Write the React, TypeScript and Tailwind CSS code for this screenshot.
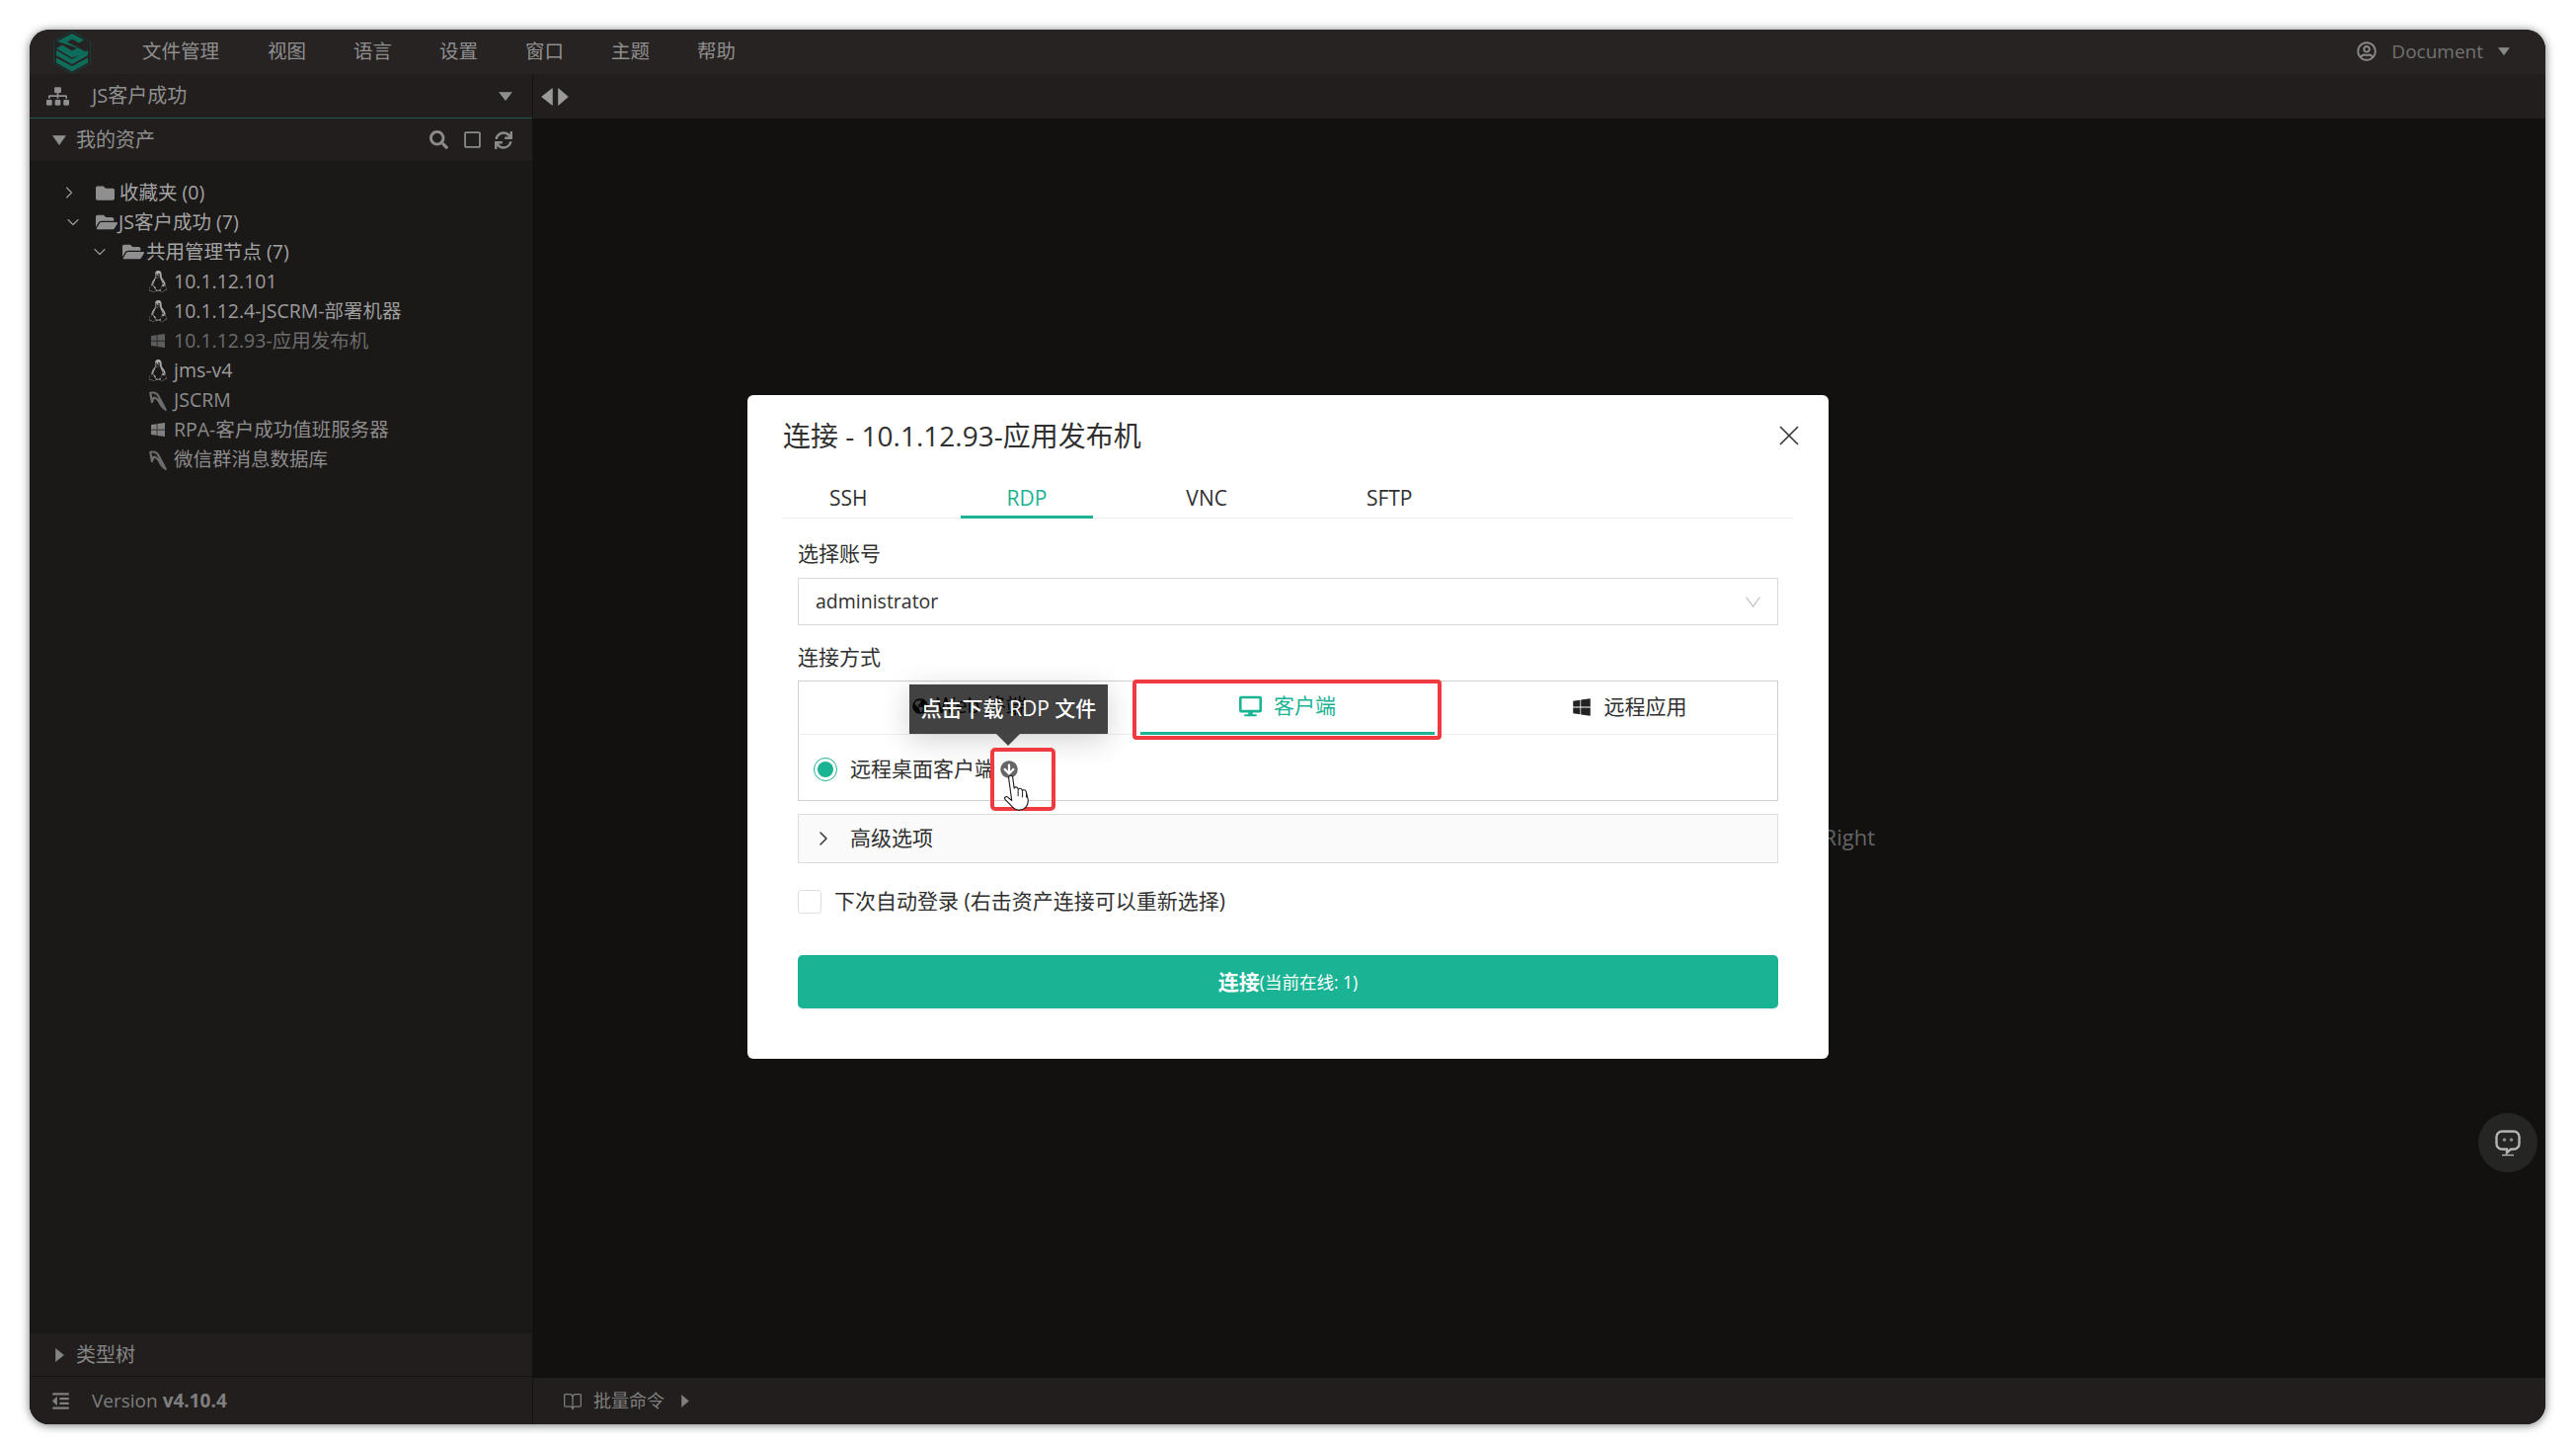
import React from "react";
import {
  FaSitemap, FaSearch, FaRegSquare, FaSync, FaFolder, FaFolderOpen, FaLinux, FaWindows,
  FaDesktop, FaOutdent, FaRegUserCircle, FaArrowCircleDown, FaGlobeAmericas,
} from "react-icons/fa";
import { ChevronRight, ChevronDown, BookOpen } from "lucide-react";

const menu = [
  ["文件管理", "w-[78px]"],
  ["视图", "w-[38px]"],
  ["语言", "w-[38px]"],
  ["设置", "w-[38px]"],
  ["窗口", "w-[38px]"],
  ["主题", "w-[38px]"],
  ["帮助", "w-[38px]"],
];

type Leaf = { icon: "linux" | "win" | "db"; text: string; tc: string; ic: string };
const leaves: Leaf[] = [
  { icon: "linux", text: "10.1.12.101", tc: "text-[#9c9c9c]", ic: "text-[#a8a8a8]" },
  { icon: "linux", text: "10.1.12.4-JSCRM-部署机器", tc: "text-[#9c9c9c]", ic: "text-[#a8a8a8]" },
  { icon: "win", text: "10.1.12.93-应用发布机", tc: "text-[#6c6c6c]", ic: "text-[#5c5c5c]" },
  { icon: "linux", text: "jms-v4", tc: "text-[#9c9c9c]", ic: "text-[#a8a8a8]" },
  { icon: "db", text: "JSCRM", tc: "text-[#8c8c8c]", ic: "text-[#6c6c6c]" },
  { icon: "win", text: "RPA-客户成功值班服务器", tc: "text-[#8c8c8c]", ic: "text-[#808080]" },
  { icon: "db", text: "微信群消息数据库", tc: "text-[#8c8c8c]", ic: "text-[#6c6c6c]" },
];

function TriDown({ className }: { className: string }) {
  return (
    <svg viewBox="0 0 14 12" preserveAspectRatio="none" className={className} fill="currentColor">
      <path d="M0.6 0.5h12.8L7 11.5z" stroke="currentColor" strokeWidth="0.8" strokeLinejoin="round" />
    </svg>
  );
}

function TriRight({ className }: { className: string }) {
  return (
    <svg viewBox="0 0 10 16" preserveAspectRatio="none" className={className} fill="currentColor">
      <path d="M0.5 0.5v15L9.5 8z" stroke="currentColor" strokeWidth="0.6" strokeLinejoin="round" />
    </svg>
  );
}

function TriLeft({ className }: { className: string }) {
  return (
    <svg viewBox="0 0 10 16" preserveAspectRatio="none" className={className} fill="currentColor">
      <path d="M9.5 0.5v15L0.5 8z" stroke="currentColor" strokeWidth="0.6" strokeLinejoin="round" />
    </svg>
  );
}

function DbIcon() {
  return (
    <svg viewBox="0 0 18 19" className="w-[20px] h-[21px]" fill="none" stroke="currentColor" strokeWidth="2" strokeLinejoin="round">
      <path d="M2 2.5c5 -1 7 1 9 6l3 5.5l2 4c-3 -2 -5 -5 -6 -7.5c-1.5 -2.5 -4 -4 -5 -3.5L3.5 11z" />
    </svg>
  );
}

function Logo() {
  return (
    <svg viewBox="0 0 38 44" className="w-[38px] h-[44px]" fill="none">
      <polygon points="19,0.5 37.5,11 37.5,33 19,43.5 0.5,33 0.5,11" stroke="#123f38" strokeWidth="1" />
      <polygon points="3,27.5 19,36 35,27.5 35,32.5 19,41.5 3,32.5" fill="#0e6d5a" />
      <polygon points="3,20 19,29 35,20 35,25 19,34 3,25" fill="#0e6d5a" />
      <polygon points="19,3 31,9.5 26,12.5 19,8.5 14,11.5 34,22 19,27.5 3,18 9,14.5 19,20.5 24,17.5 4,11" fill="#0e6d5a" />
    </svg>
  );
}

function Hand() {
  return (
    <svg viewBox="0 0 25 30" className="w-[31px] h-[37px]">
      <path
        d="M5 1.5c1 -1 2.5 -.5 2.8 1L9 11.5c.2 -1.4 2.6 -1.4 3 0l.4 1c.2 -1.4 2.6 -1.3 3 .2l.3 .9c.3 -1.2 2.5 -1.2 3 .3l1.5 6c.8 3.5 -.8 7 -3.5 8.5c-3 1.5 -7 1 -9 -1.5L1.5 20.5c-1 -1.3 .8 -3 2.2 -1.8L7 21.5L4.5 3c-.1 -.6 .1 -1.1 .5 -1.5z"
        fill="#fff"
        stroke="#1a1a1a"
        strokeWidth="0.9"
        strokeLinejoin="round"
      />
      <path d="M12.2 13v5M15.8 14v5M19 15v4" stroke="#1a1a1a" strokeWidth="0.8" fill="none" />
    </svg>
  );
}

function ChatIcon() {
  return (
    <svg viewBox="0 0 26 27" className="w-[26px] h-[27px]" fill="none">
      <path
        d="M7 1.5h12a5.5 5.5 0 0 1 5.5 5.5v7a5.5 5.5 0 0 1 -5.5 5.5h-3l-4 3.5v-3.5h-5a5.5 5.5 0 0 1 -5.5 -5.5v-7a5.5 5.5 0 0 1 5.5 -5.5z"
        stroke="#b4b4b4"
        strokeWidth="2.4"
      />
      <circle cx="9.5" cy="10" r="1.8" fill="#8a8a8a" />
      <circle cx="16.5" cy="10" r="1.8" fill="#8a8a8a" />
      <path d="M7 25.5h12" stroke="#b4b4b4" strokeWidth="1.4" />
    </svg>
  );
}

export default function App() {
  return (
    <div className="w-[2609px] h-[1462px] bg-white pl-[30px] pr-[31px] pt-[30px] pb-[20px] overflow-hidden font-['Open_Sans','Noto_Sans_CJK_SC',sans-serif]">
      <div className="relative w-full h-full rounded-[20px] overflow-hidden flex flex-col bg-[#131110] shadow-[0_1px_10px_rgba(0,0,0,0.55)]">
        {/* top bar */}
        <div className="h-[45px] shrink-0 bg-[#272322] flex items-center text-[19.5px] text-[#8f8f8f]">
          <div className="ml-[24px] w-[38px] h-[45px] flex items-center justify-center">
            <Logo />
          </div>
          <div className="ml-[52px] pb-[2px] flex items-center gap-[49px]">
            {menu.map(([t, w]) => (
              <span key={t} className={w + " whitespace-nowrap"}>{t}</span>
            ))}
          </div>
          <div className="ml-auto mr-[36px] pb-[1px] flex items-center text-[#737373] text-[19px]">
            <FaRegUserCircle className="w-[20px] h-[20px] text-[#8a8a8a]" />
            <span className="ml-[15px]">Document</span>
            <TriDown className="ml-[15px] w-[12px] h-[8px] text-[#8a8a8a]" />
          </div>
        </div>

        <div className="flex-1 flex min-h-0">
          {/* sidebar */}
          <div className="w-[510px] shrink-0 flex flex-col bg-[#1b1818] border-r border-[#151312]">
            <div className="h-[45px] shrink-0 bg-[#211e1d] border-b border-[#1d5a4c] flex items-center text-[20px] text-[#8f8f8f]">
              <FaSitemap className="ml-[17px] w-[23px] h-[23px] text-[#8f8f8f]" />
              <span className="ml-[23px]">JS客户成功</span>
              <TriDown className="ml-auto mr-[20px] w-[14px] h-[9px] text-[#8f8f8f]" />
            </div>
            <div className="h-[44px] shrink-0 bg-[#211e1d] border-b border-[#181615] flex items-center text-[20px] text-[#8f8f8f]">
              <TriDown className="ml-[23px] w-[14px] h-[10px]" />
              <span className="ml-[10px]">我的资产</span>
              <div className="ml-auto mr-[20px] flex items-center text-[#8a8a8a]">
                <FaSearch className="w-[19px] h-[19px]" />
                <FaRegSquare className="ml-[15px] w-[19px] h-[19px]" />
                <FaSync className="ml-[13px] w-[18px] h-[18px]" />
              </div>
            </div>
            <div className="flex-1 pt-[16px] text-[19.5px] text-[#a3a3a3]">
              <div className="h-[30px] flex items-center pl-[30px]">
                <div className="w-[20px] flex justify-center text-[#999]"><ChevronRight size={22} strokeWidth={1.4} /></div>
                <FaFolder className="ml-[17px] w-[19px] h-[19px] text-[#8f8f8f]" />
                <span className="ml-[5px] whitespace-nowrap">收藏夹 (0)</span>
              </div>
              <div className="h-[30px] flex items-center pl-[34px]">
                <div className="w-[20px] flex justify-center text-[#999]"><ChevronDown size={22} strokeWidth={1.4} /></div>
                <FaFolderOpen className="ml-[13px] w-[22px] h-[20px] text-[#8f8f8f]" />
                <span className="ml-[1px] whitespace-nowrap">JS客户成功 (7)</span>
              </div>
              <div className="h-[30px] flex items-center pl-[61px]">
                <div className="w-[20px] flex justify-center text-[#999]"><ChevronDown size={22} strokeWidth={1.4} /></div>
                <FaFolderOpen className="ml-[13px] w-[22px] h-[20px] text-[#8f8f8f]" />
                <span className="ml-[2px] whitespace-nowrap">共用管理节点 (7)</span>
              </div>
              {leaves.map((l) => (
                <div key={l.text} className="h-[30px] flex items-center pl-[120px]">
                  <div className={"w-[20px] flex justify-center " + l.ic}>
                    {l.icon === "linux" && <FaLinux className="w-[20px] h-[22px]" />}
                    {l.icon === "win" && <FaWindows className="w-[16px] h-[16px]" />}
                    {l.icon === "db" && <DbIcon />}
                  </div>
                  <span className={"ml-[6px] whitespace-nowrap " + l.tc}>{l.text}</span>
                </div>
              ))}
            </div>
            <div className="h-[44px] shrink-0 bg-[#211e1d] border-b border-[#151312] flex items-center text-[20px] text-[#858585]">
              <TriRight className="ml-[26px] w-[9px] h-[14px]" />
              <span className="ml-[12px]">类型树</span>
            </div>
            <div className="h-[48px] shrink-0 bg-[#211e1d] flex items-center text-[19px] text-[#7f7f7f]">
              <FaOutdent className="ml-[22px] w-[19px] h-[19px]" />
              <span className="ml-[22px] whitespace-nowrap">Version <b className="font-bold">v4.10.4</b></span>
            </div>
          </div>

          {/* main */}
          <div className="flex-1 flex flex-col min-w-0">
            <div className="h-[45px] shrink-0 bg-[#211e1d] flex items-center text-[#9a9a9a]">
              <TriLeft className="ml-[8px] w-[12px] h-[18px]" />
              <TriRight className="ml-[5px] w-[11px] h-[18px]" />
            </div>
            <div className="flex-1 flex items-center justify-center pt-[180px] text-[22px] text-[#646464]">
              <div className="w-[680px] text-right whitespace-nowrap">Ctrl + Alt + Left / Right</div>
            </div>
            <div className="h-[47px] shrink-0 bg-[#211e1d] flex items-center text-[18px] text-[#7f7f7f]">
              <BookOpen size={20} strokeWidth={1.5} className="ml-[30px]" />
              <span className="ml-[11px]">批量命令</span>
              <TriRight className="ml-[17px] w-[8px] h-[13px]" />
            </div>
          </div>
        </div>

        {/* chat button */}
        <div className="absolute right-[8px] top-[1097px] w-[60px] h-[60px] rounded-full bg-[#252523] flex items-center justify-center">
          <ChatIcon />
        </div>

        {/* modal */}
        <div className="absolute left-[727px] top-[370px] w-[1095px] h-[672px] bg-white rounded-[6px] pt-[23px] pl-[36px] pr-[36px] text-[#303030] text-[21px]">
          <div className="flex items-center h-[36px]">
            <span className="text-[28px] leading-[36px]">连接 - 10.1.12.93-应用发布机</span>
            <svg viewBox="0 0 20 20" className="ml-auto -mr-[6px] w-[20px] h-[20px]" fill="none" stroke="#333" strokeWidth="1.6">
              <path d="M1 1l18 18M19 1L1 19" />
            </svg>
          </div>
          <div className="mt-[26px] h-[40px] flex gap-[47px] border-b border-[#eeeeee] text-[21px]">
            <div className="px-[47px] h-[40px] flex items-center">SSH</div>
            <div className="px-[47px] h-[40px] flex items-center text-[#1ab394] border-b-[3px] border-[#1ab394] pt-[3px]">RDP</div>
            <div className="px-[47px] h-[40px] flex items-center">VNC</div>
            <div className="px-[47px] h-[40px] flex items-center">SFTP</div>
          </div>
          <div className="px-[15px]">
            <div className="mt-[21px] h-[28px] leading-[28px] text-[21px]">选择账号</div>
            <div className="mt-[11px] h-[48px] border border-[#d9d9d9] flex items-center pl-[17px] pr-[17px]">
              <span className="text-[19.5px]">administrator</span>
              <svg viewBox="0 0 15 11" className="ml-auto w-[15px] h-[11px]" fill="none" stroke="#bdbdbd" strokeWidth="1.2">
                <path d="M0.5 0.5L7.5 10L14.5 0.5" />
              </svg>
            </div>
            <div className="mt-[18px] h-[28px] leading-[28px]">连接方式</div>
            <div className="relative mt-[10px] h-[122px] border border-[#d0d0d0]">
              <div className="h-[54px] flex border-b border-[#eeeeee]">
                <div className="w-[346px] flex items-center justify-center gap-[8px] pb-[4px] text-[#111]">
                  <FaGlobeAmericas className="w-[16px] h-[16px]" />
                  <span>Web 终端</span>
                </div>
                <div className="w-[298px] flex items-center justify-center gap-[12px] -mb-[1px] border-b-[3px] border-[#1ab394] text-[#1ab394] pb-[2px]">
                  <FaDesktop className="w-[23px] h-[22px]" />
                  <span>客户端</span>
                </div>
                <div className="flex-1 flex items-center justify-center gap-[13px] pl-[47px] pb-[2px]">
                  <FaWindows className="w-[20px] h-[20px] text-[#222]" />
                  <span>远程应用</span>
                </div>
              </div>
              <div className="h-[66px] flex items-center pl-[15px] pt-[3px]">
                <div className="w-[24px] h-[24px] rounded-full border border-[#1ab394] flex items-center justify-center">
                  <div className="w-[16px] h-[16px] rounded-full bg-[#1ab394]" />
                </div>
                <span className="ml-[13px] whitespace-nowrap">远程桌面客户端</span>
                <FaArrowCircleDown className="ml-[5px] w-[18px] h-[18px] text-[#666]" />
              </div>

              {/* tooltip */}
              <div className="absolute left-[112px] top-[3px] w-[201px] h-[50px] bg-[rgba(0,0,0,0.74)] text-white text-[21px] font-medium flex items-center justify-center whitespace-nowrap shadow-[0_6px_30px_rgba(0,0,0,0.18)]">
                点击下载 RDP 文件
                <div className="absolute left-[88px] top-[50px] w-0 h-0 border-x-[12px] border-x-transparent border-t-[12px] border-t-[#444]" />
              </div>
              {/* annotations */}
              <div className="absolute left-[338px] -top-[2px] w-[313px] h-[61px] border-4 border-[#ef3b3f] rounded-[4px]" />
              <div className="absolute left-[194px] top-[67px] w-[66px] h-[64px] border-4 border-[#ef3b3f] rounded-[5px]" />
              <div className="absolute left-[207px] top-[94px]">
                <Hand />
              </div>
            </div>
            <div className="mt-[13px] h-[50px] border border-[#dddddd] bg-[#fafafa] flex items-center">
              <ChevronRight size={24} strokeWidth={1.5} className="ml-[13px] text-[#333]" />
              <span className="ml-[15px]">高级选项</span>
            </div>
            <div className="mt-[27px] h-[24px] flex items-center">
              <div className="w-[24px] h-[24px] border border-[#dedede] rounded-[3px]" />
              <span className="ml-[13px] whitespace-nowrap">下次自动登录 (右击资产连接可以重新选择)</span>
            </div>
            <div className="mt-[42px] h-[54px] pt-[1px] bg-[#1ab394] rounded-[5px] flex items-center justify-center text-white shadow-[0_2px_0_rgba(0,0,0,0.03)]">
              <span className="font-semibold">连接</span>
              <span className="text-[17.5px]">(当前在线: 1)</span>
            </div>
          </div>
        </div>
      </div>
    </div>
  );
}
